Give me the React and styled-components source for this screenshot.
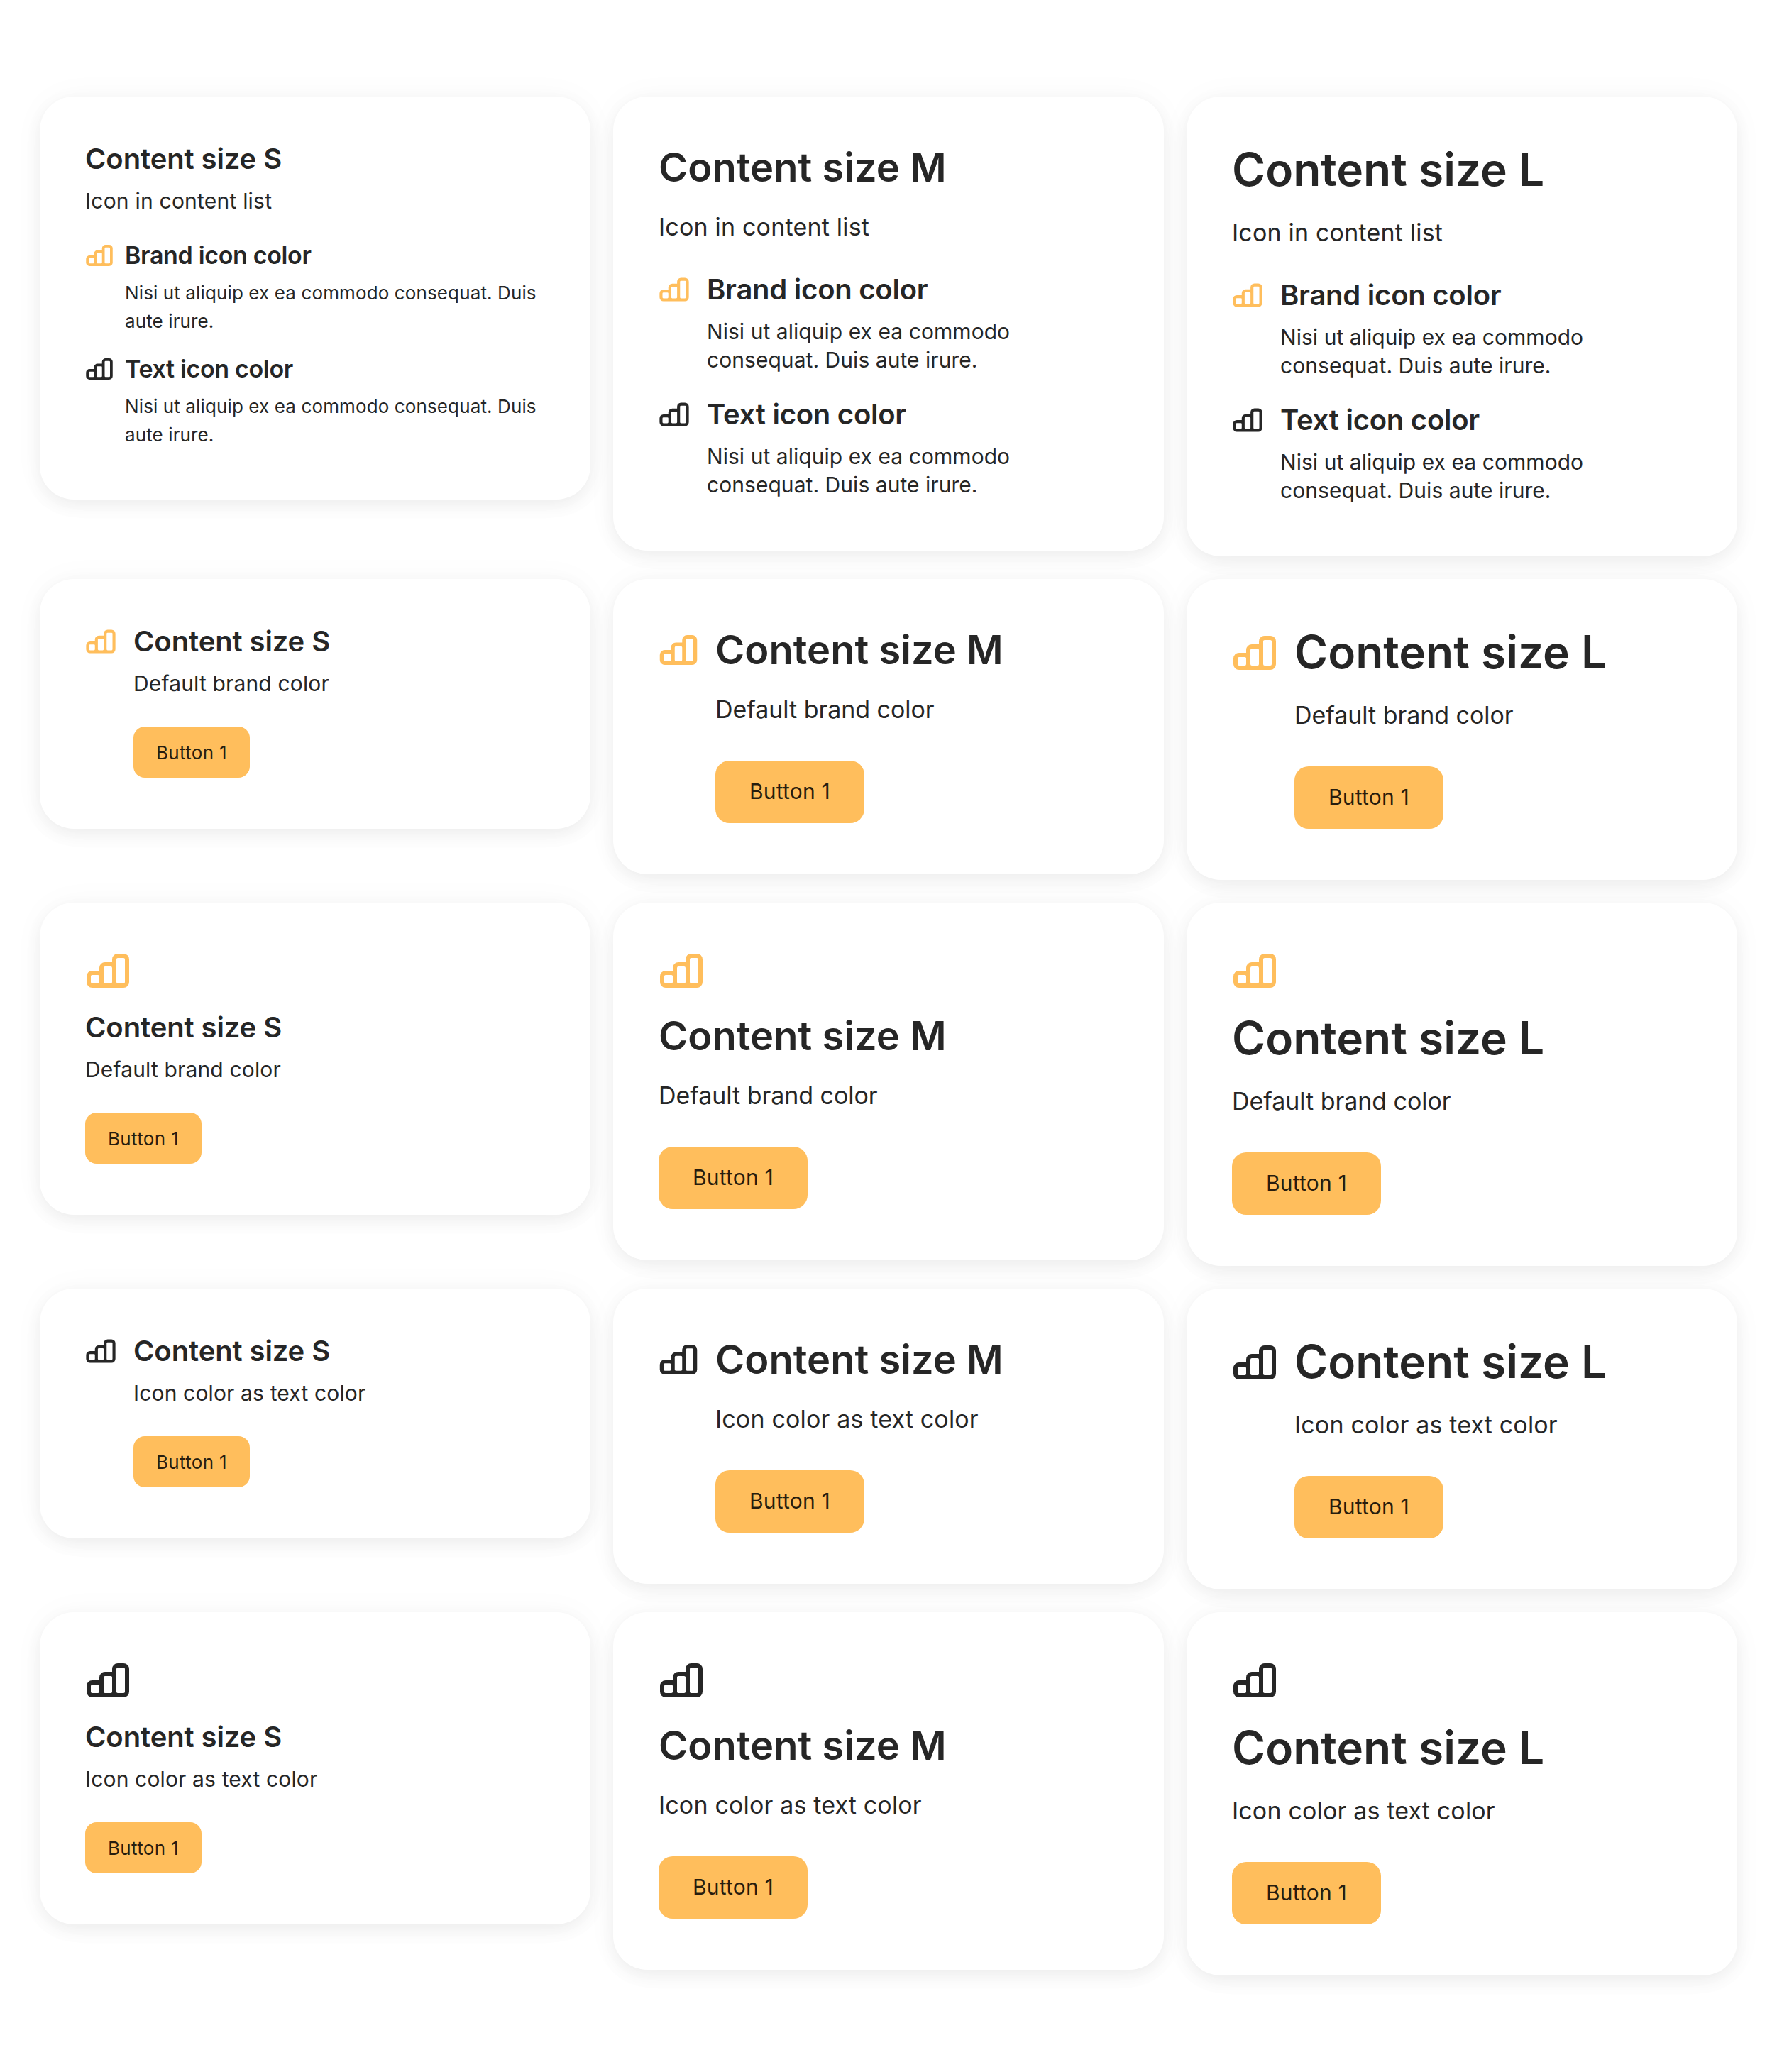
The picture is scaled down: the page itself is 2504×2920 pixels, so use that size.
import React from "react";
import styled, { createGlobalStyle, css } from "styled-components";

const BRAND = "#ffbe5c";
const TEXT = "#262626";

const GlobalStyle = createGlobalStyle`
  *, *::before, *::after { box-sizing: border-box; }
  body {
    margin: 0;
    background: #ffffff;
    color: ${TEXT};
    font-family: Inter, "Liberation Sans", sans-serif;
  }
  h2, h3, p, ul { margin: 0; padding: 0; }
`;

const SIZES = {
  S: {
    title: { size: 40, line: 47, spacing: -0.1 },
    text: { size: 30, line: 40, gap: 16, spacing: 0.15 },
    icon: { size: 44, top: 2 },
    actions: 41,
    list: { gap: 36, between: 26.5, bottom: -0.5, textGap: 12.5, iconSize: 40, iconTop: 1, iconGap: 16 },
    itemTitle: { size: 34, line: 41, spacing: -0.34 },
    itemText: { size: 26, spacing: 0.12 },
    button: { size: 26, height: 72, pad: 32, lift: 0, radius: 16, spacing: 0.33 },
  },
  M: {
    title: { size: 56, line: 72, spacing: 0.05 },
    text: { size: 34, line: 49, gap: 23, spacing: -0.05 },
    icon: { size: 56, top: 8 },
    actions: 48,
    list: { gap: 39, between: 32, bottom: 1, textGap: 15, iconSize: 44, iconTop: 3, iconGap: 24 },
    itemTitle: { size: 40, line: 49, spacing: -0.25 },
    itemText: { size: 30, spacing: 0.05 },
    button: { size: 30, height: 88, pad: 48, lift: 2, radius: 20, spacing: 0.21 },
  },
};
SIZES.L = {
  ...SIZES.M,
  title: { size: 64, line: 77, spacing: 0 },
  text: { ...SIZES.M.text, gap: 26 },
  icon: { size: 64, top: 8 },
};

const type = ({ $t, $tracking = 0 }) => css`
  font-size: ${$t.size}px;
  letter-spacing: ${$t.spacing + $tracking}px;
`;

const Page = styled.main`
  display: flex;
  flex-direction: column;
  gap: 32px;
  width: 2504px;
  min-height: 2920px;
  padding: 136px 56px;
`;

const CardRow = styled.section`
  display: grid;
  grid-template-columns: repeat(3, 776px);
  gap: 32px;
  align-items: start;
`;

const Card = styled.article`
  display: flex;
  flex-direction: ${({ $stacked }) => ($stacked ? "column" : "row")};
  align-items: flex-start;
  gap: 24px;
  padding: 64px 64px 72px;
  border-radius: 48px;
  background: #ffffff;
  box-shadow: 0 8px 24px rgba(0, 0, 0, 0.06), 0 0 48px rgba(0, 0, 0, 0.03);
`;

const IconSvg = styled.svg`
  display: block;
  flex: none;
  width: ${({ $size }) => $size}px;
  height: ${({ $size }) => $size}px;
  margin-top: ${({ $top }) => $top}px;
  color: ${({ $color }) => $color};
`;

const Content = styled.div`
  flex: 1;
  min-width: 0;
`;

const Title = styled.h2`
  font-weight: 600;
  line-height: ${({ $t }) => $t.line}px;
  ${type}
`;

const Text = styled.p`
  margin-top: ${({ $t }) => $t.gap}px;
  line-height: ${({ $t }) => $t.line}px;
  ${type}
`;

const Button = styled.button`
  display: flex;
  align-items: center;
  height: ${({ $t }) => $t.height}px;
  margin-top: ${({ $gap }) => $gap}px;
  padding: 0 ${({ $t }) => $t.pad}px ${({ $t }) => $t.lift}px;
  border: 0;
  border-radius: ${({ $t }) => $t.radius}px;
  background: ${BRAND};
  color: rgba(0, 0, 0, 0.85);
  font-family: inherit;
  white-space: nowrap;
  ${type}
`;

const List = styled.ul`
  display: flex;
  flex-direction: column;
  gap: ${({ $l }) => $l.between}px;
  margin-top: ${({ $l }) => $l.gap}px;
  margin-bottom: ${({ $l }) => $l.bottom}px;
  list-style: none;
`;

const Item = styled.li`
  display: flex;
  align-items: flex-start;
  gap: ${({ $gap }) => $gap}px;
`;

const ItemTitle = styled.h3`
  font-weight: 600;
  line-height: ${({ $t }) => $t.line}px;
  ${type}
`;

const ItemText = styled.p`
  margin-top: ${({ $gap }) => $gap}px;
  line-height: 40px;
  ${type}
`;

function BarsIcon({ size, color, top = 0 }) {
  return (
    <IconSvg viewBox="0 0 64 64" $size={size} $color={color} $top={top} aria-hidden="true">
      <path
        fill="currentColor"
        fillRule="evenodd"
        d="M10 56a8 8 0 0 1-8-8v-8a8 8 0 0 1 8-8h10v-4a8 8 0 0 1 8-8h10v-4a8 8 0 0 1 8-8h8a8 8 0 0 1 8 8v32a8 8 0 0 1-8 8z
           M10 38a2 2 0 0 0-2 2v8a2 2 0 0 0 2 2h8a2 2 0 0 0 2-2v-8a2 2 0 0 0-2-2z
           M28 26a2 2 0 0 0-2 2v20a2 2 0 0 0 2 2h8a2 2 0 0 0 2-2v-20a2 2 0 0 0-2-2z
           M46 14a2 2 0 0 0-2 2v32a2 2 0 0 0 2 2h8a2 2 0 0 0 2-2v-32a2 2 0 0 0-2-2z"
      />
    </IconSvg>
  );
}

const ITEMS = [
  { title: "Brand icon color", color: BRAND },
  { title: "Text icon color", color: TEXT },
];

function ListCard({ name }) {
  const s = SIZES[name];
  return (
    <Card>
      <Content>
        <Title $t={s.title}>Content size {name}</Title>
        <Text $t={s.text} $tracking={name === "S" ? 0.07 : 0.24}>
          Icon in content list
        </Text>
        <List $l={s.list}>
          {ITEMS.map((item) => (
            <Item key={item.title} $gap={s.list.iconGap}>
              <BarsIcon size={s.list.iconSize} top={s.list.iconTop} color={item.color} />
              <Content>
                <ItemTitle $t={s.itemTitle}>{item.title}</ItemTitle>
                <ItemText $t={s.itemText} $gap={s.list.textGap}>
                  Nisi ut aliquip ex ea commodo consequat. Duis aute irure.
                </ItemText>
              </Content>
            </Item>
          ))}
        </List>
      </Content>
    </Card>
  );
}

function ActionCard({ name, stacked, color, text, tracking }) {
  const s = SIZES[name];
  return (
    <Card $stacked={stacked}>
      <BarsIcon size={stacked ? 64 : s.icon.size} top={stacked ? 0 : s.icon.top} color={color} />
      <Content>
        <Title $t={s.title}>Content size {name}</Title>
        <Text $t={s.text} $tracking={name === "S" ? 0 : tracking}>
          {text}
        </Text>
        <Button type="button" $t={s.button} $gap={s.actions}>
          Button 1
        </Button>
      </Content>
    </Card>
  );
}

const ROWS = [
  { color: BRAND, text: "Default brand color", tracking: 0, stacked: false },
  { color: BRAND, text: "Default brand color", tracking: 0, stacked: true },
  { color: TEXT, text: "Icon color as text color", tracking: 0.21, stacked: false },
  { color: TEXT, text: "Icon color as text color", tracking: 0.21, stacked: true },
];

const NAMES = ["S", "M", "L"];

export default function App() {
  return (
    <>
      <GlobalStyle />
      <Page>
        <CardRow>
          {NAMES.map((name) => (
            <ListCard key={name} name={name} />
          ))}
        </CardRow>
        {ROWS.map((row, i) => (
          <CardRow key={i}>
            {NAMES.map((name) => (
              <ActionCard key={name} name={name} {...row} />
            ))}
          </CardRow>
        ))}
      </Page>
    </>
  );
}
